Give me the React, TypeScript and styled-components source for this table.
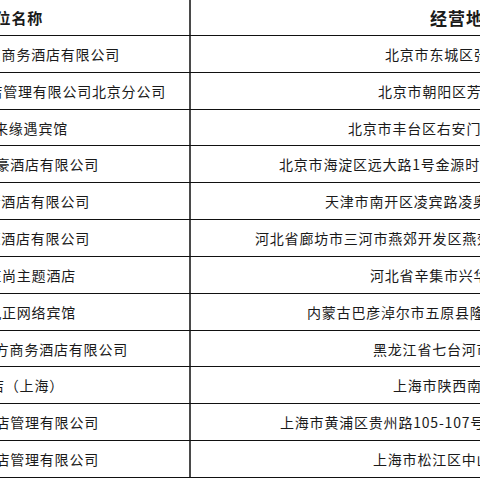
import styled, { createGlobalStyle } from 'styled-components';

const GlobalStyle = createGlobalStyle`
  html, body {
    margin: 0;
    padding: 0;
    background: #ffffff;
  }
  body {
    font-family: "Noto Sans CJK SC", "Liberation Sans", sans-serif;
    color: #1a1a1a;
  }
`;

const Viewport = styled.div`
  width: 480px;
  height: 480px;
  overflow: hidden;
  background: #ffffff;
`;

// the sheet is wider than the window, so it starts left of the edge
const Sheet = styled.div`
  margin-left: -60px;
  width: 700px;
  display: flex;
  flex-direction: column;
`;

const Row = styled.div<{ $head?: boolean }>`
  display: flex;
  height: ${(p) => (p.$head ? '35px' : '35.83px')};
  border-bottom: 1px solid #111;
  font-size: ${(p) => (p.$head ? '15px' : '14px')};
  letter-spacing: 0.8px;
  font-weight: ${(p) => (p.$head ? 700 : 400)};
  white-space: nowrap;
`;

const NameCell = styled.div<{ $end: number }>`
  flex: none;
  width: 251px;
  box-sizing: border-box;
  border-right: 2px solid #4a4a4a;
  display: flex;
  align-items: center;
  justify-content: flex-end;
  padding-right: ${(p) => 189 - p.$end}px;
  overflow: hidden;
`;

const AddrCell = styled.div<{ $start: number; $big?: boolean }>`
  flex: none;
  width: 440px;
  display: flex;
  align-items: center;
  padding-left: ${(p) => p.$start - 191}px;
  font-size: ${(p) => (p.$big ? '17px' : 'inherit')};
  letter-spacing: ${(p) => (p.$big ? '1px' : 'inherit')};
  overflow: hidden;
`;

type Entry = { name: string; end: number; addr: string; start: number };

const rows: Entry[] = [
  { name: '东商务酒店有限公司', end: 120, addr: '北京市东城区张自忠路', start: 385 },
  { name: '店管理有限公司北京分公司', end: 166, addr: '北京市朝阳区芳园里', start: 378 },
  { name: '有来缘遇宾馆', end: 68, addr: '北京市丰台区右安门外', start: 348 },
  { name: '华豪酒店有限公司', end: 99, addr: '北京市海淀区远大路1号金源时代', start: 279 },
  { name: '斯酒店有限公司', end: 90, addr: '天津市南开区凌宾路凌奥花园', start: 325 },
  { name: '源酒店有限公司', end: 90, addr: '河北省廊坊市三河市燕郊开发区燕郊', start: 255 },
  { name: '庄尚主题酒店', end: 76, addr: '河北省辛集市兴华路', start: 370 },
  { name: '九正网络宾馆', end: 76, addr: '内蒙古巴彦淖尔市五原县隆兴', start: 307 },
  { name: '东方商务酒店有限公司', end: 128, addr: '黑龙江省七台河市', start: 373 },
  { name: '酒店（上海）', end: 64, addr: '上海市陕西南路', start: 393 },
  { name: '酒店管理有限公司', end: 99, addr: '上海市黄浦区贵州路105-107号', start: 280 },
  { name: '酒店管理有限公司', end: 99, addr: '上海市松江区中山', start: 373 },
];

export default function App() {
  return (
    <Viewport>
      <GlobalStyle />
      <Sheet>
        <Row $head>
          <NameCell $end={43}>单位名称</NameCell>
          <AddrCell $start={430} $big>经营地址</AddrCell>
        </Row>
        {rows.map((r, i) => (
          <Row key={i}>
            <NameCell $end={r.end}>{r.name}</NameCell>
            <AddrCell $start={r.start}>{r.addr}</AddrCell>
          </Row>
        ))}
      </Sheet>
    </Viewport>
  );
}
